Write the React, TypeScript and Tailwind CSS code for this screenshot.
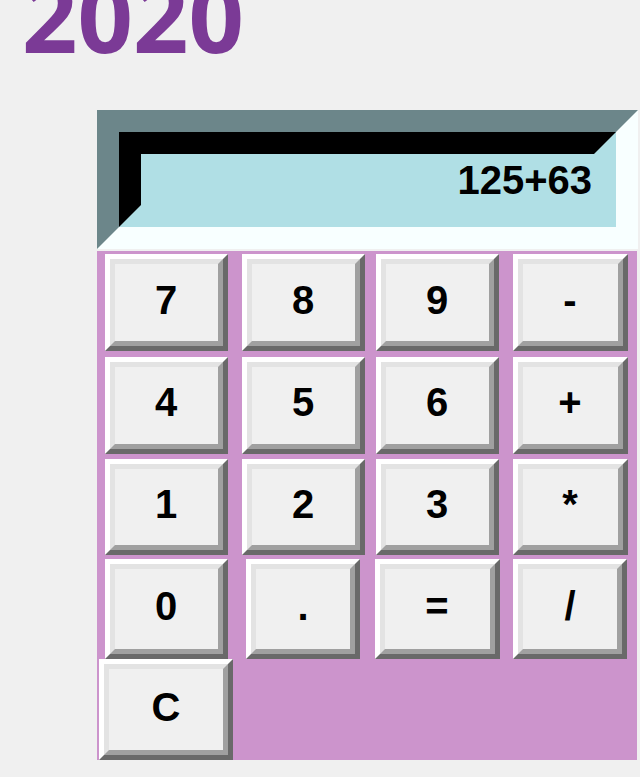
import React from "react";

type Key = { label: string; w: number; h: number };

const rows: Key[][] = [
  [
    { label: "7", w: 123, h: 97 },
    { label: "8", w: 123, h: 97 },
    { label: "9", w: 123, h: 97 },
    { label: "-", w: 115, h: 97 },
  ],
  [
    { label: "4", w: 123, h: 97 },
    { label: "5", w: 123, h: 97 },
    { label: "6", w: 123, h: 97 },
    { label: "+", w: 115, h: 97 },
  ],
  [
    { label: "1", w: 123, h: 96 },
    { label: "2", w: 123, h: 96 },
    { label: "3", w: 123, h: 96 },
    { label: "*", w: 115, h: 96 },
  ],
  [
    { label: "0", w: 123, h: 100 },
    { label: ".", w: 114, h: 100 },
    { label: "=", w: 125, h: 100 },
    { label: "/", w: 114, h: 100 },
  ],
];

function CalcButton({ k }: { k: Key }) {
  return (
    <button
      type="button"
      className="box-border border-[5px] border-solid border-t-white border-l-white border-b-[#696969] border-r-[#696969] p-0"
      style={{ width: k.w, height: k.h }}
    >
      <span className="flex h-full w-full items-center justify-center border-[5px] border-solid border-t-[#e3e3e3] border-l-[#e3e3e3] border-b-[#a0a0a0] border-r-[#a0a0a0] bg-[#f0f0f0] pb-[6px] text-[40px] font-bold leading-none text-black [font-family:'Liberation_Sans',Arial,sans-serif]">
        {k.label}
      </span>
    </button>
  );
}

export default function App() {
  return (
    <div className="min-h-[777px] w-[640px] overflow-hidden bg-[#f0f0f0]">
      <h1 className="ml-[22px] mt-[-33px] text-[97px] font-bold leading-none text-[#7b3a96] [font-family:'Open_Sans',sans-serif]">
        2020
      </h1>
      <div className="ml-[97px] mt-[46px] w-[541px]">
        <div className="box-border border-[22px] border-solid border-t-[#6c868a] border-l-[#6c868a] border-b-[#f8ffff] border-r-[#f8ffff]">
          <div className="box-border border-[22px] border-solid border-t-black border-l-black border-b-[#b0dfe5] border-r-[#b0dfe5] bg-[#b0dfe5]">
            <div className="h-[51px] pr-[2px] pt-[3px] text-right text-[40px] font-bold leading-[46px] text-black [font-family:'Liberation_Sans',Arial,sans-serif]">
              125+63
            </div>
          </div>
        </div>
        <div className="mt-[2px] grid w-[540px] grid-cols-[138px_136px_132px_134px] grid-rows-[103px_102px_102px_101px_101px] bg-[#cc94cc]">
          {rows.map((row, ri) =>
            row.map((k) => (
              <div key={`${ri}-${k.label}`} className="flex items-center justify-center">
                <CalcButton k={k} />
              </div>
            ))
          )}
          <div className="flex items-center justify-center">
            <CalcButton k={{ label: "C", w: 134, h: 101 }} />
          </div>
        </div>
      </div>
    </div>
  );
}
